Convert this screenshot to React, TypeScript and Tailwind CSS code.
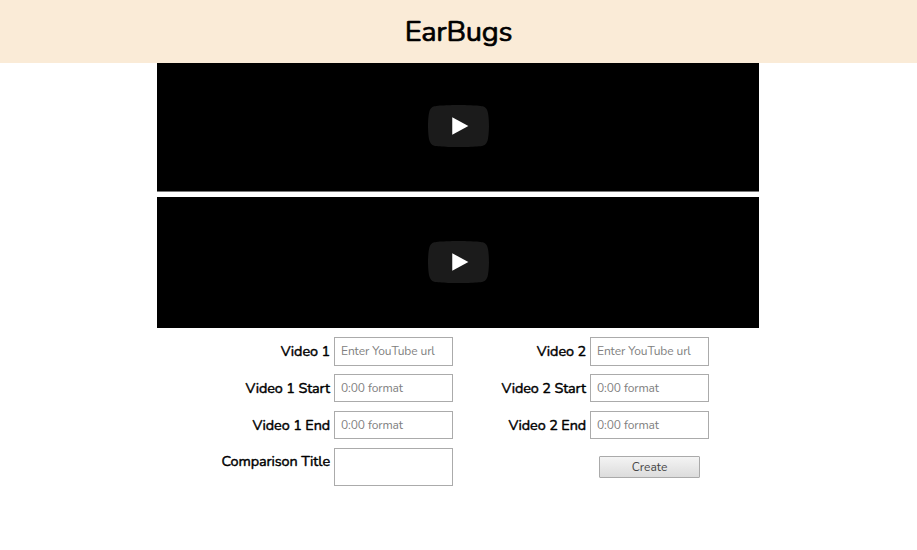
import React from 'react';

function Player({ className, iconClass }: { className: string; iconClass: string }) {
  return (
    <div className={`flex w-[602px] justify-center bg-black ${className}`}>
      <svg className={`h-[42px] w-[61px] ${iconClass}`} viewBox="0 0 68 48" preserveAspectRatio="none">
        <path
          d="M66.52 7.74c-.78-2.93-2.49-5.41-5.42-6.19C55.79.13 34 0 34 0S12.21.13 6.9 1.55C3.97 2.33 2.27 4.81 1.48 7.74.06 13.05 0 24 0 24s.06 10.95 1.48 16.26c.78 2.93 2.49 5.41 5.42 6.19C12.21 47.87 34 48 34 48s21.79-.13 27.1-1.55c2.93-.78 4.64-3.26 5.42-6.19C67.94 34.95 68 24 68 24s-.06-10.95-1.48-16.26z"
          fill="#1b1b1b"
        />
        <path d="M45 24 27 14v20z" fill="#fff" />
      </svg>
    </div>
  );
}

function Field({ label, placeholder, className = '', labelClass = 'pt-[3px]', inputClass = 'h-[28px]' }: {
  label: string;
  placeholder?: string;
  className?: string;
  labelClass?: string;
  inputClass?: string;
}) {
  return (
    <label className={`flex items-start justify-end gap-1 ${className}`}>
      <span className={`text-[14.4px] leading-[22px] font-normal tracking-[-0.1px] whitespace-nowrap text-black [-webkit-text-stroke:0.45px_black] ${labelClass}`}>
        {label}
      </span>
      <input
        type="text"
        placeholder={placeholder}
        className={`w-[119px] border border-[#ababab] bg-white px-[6px] text-[12px] tracking-[-0.1px] text-[#444] outline-none placeholder:text-[#808080] ${inputClass}`}
      />
    </label>
  );
}

export default function App() {
  return (
    <main className="h-[550px] w-[917px] overflow-hidden bg-white font-['Nunito','Lato',sans-serif]">
      <header className="flex h-[63px] items-center justify-center bg-[#faebd7]">
        <h1 className="text-[29px] leading-none font-normal tracking-[-0.25px] text-black [-webkit-text-stroke:0.7px_black]">EarBugs</h1>
      </header>
      <section className="ml-[157px] flex w-[602px] flex-col gap-[5px]">
        <Player className="h-[129px] border-b border-[#777]" iconClass="mt-[42px]" />
        <Player className="h-[131px]" iconClass="mt-[44px]" />
      </section>
      <form className="ml-[157px] flex w-[552px] pt-[9px]">
        <div className="flex w-[296px] flex-col">
          <Field className="h-[37px]" label="Video 1" placeholder="Enter YouTube url" inputClass="h-[29px] pb-[2px]" />
          <Field className="h-[37px]" label="Video 1 Start" placeholder="0:00 format" />
          <Field className="h-[37px]" label="Video 1 End" placeholder="0:00 format" />
          <Field label="Comparison Title" labelClass="pt-[2px]" inputClass="h-[38px]" />
        </div>
        <div className="flex w-[256px] flex-col">
          <Field className="h-[37px]" label="Video 2" placeholder="Enter YouTube url" inputClass="h-[29px] pb-[2px]" />
          <Field className="h-[37px]" label="Video 2 Start" placeholder="0:00 format" />
          <Field className="h-[37px]" label="Video 2 End" placeholder="0:00 format" />
          <button
            type="button"
            className="mt-2 mr-[9px] h-[22px] w-[101px] self-end rounded-[1px] border border-[#aaa] bg-linear-to-b from-[#f4f4f4] to-[#dcdcdc] text-[12px] leading-[19px] text-[#444]"
          >
            Create
          </button>
        </div>
      </form>
    </main>
  );
}
